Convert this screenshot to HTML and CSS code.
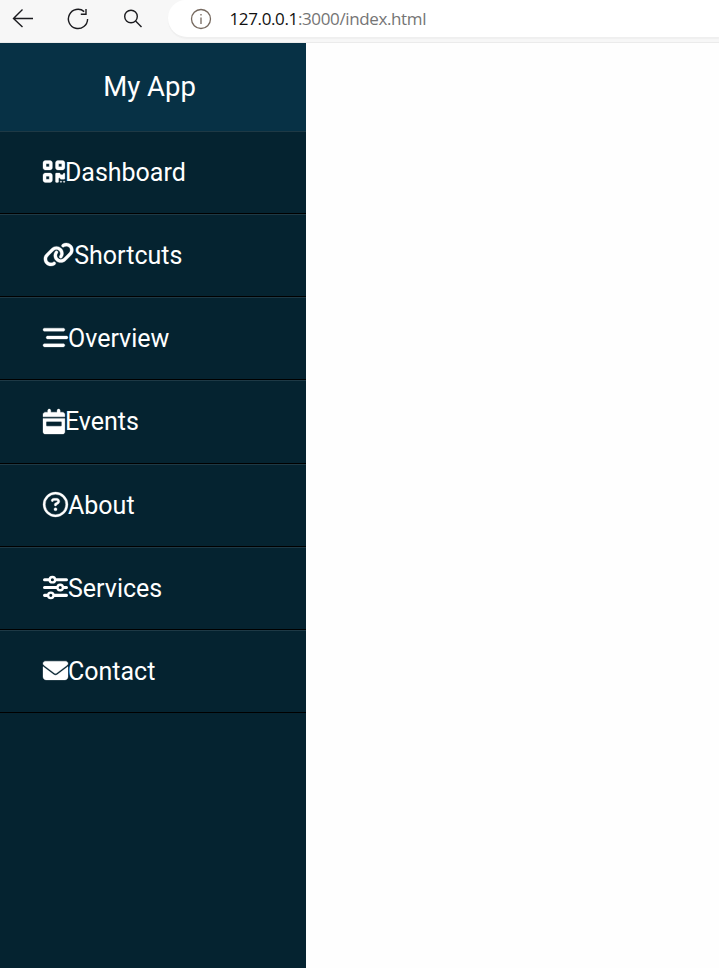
FILE: index.html
```html
<!DOCTYPE html>
<html lang="en">
<head>
<meta charset="utf-8">
<title>My App</title>
<link rel="stylesheet" href="styles.css">
</head>
<body>
<header class="toolbar">
  <svg class="tools" width="168" height="43" viewBox="0 0 168 43">
    <path d="M33 18.5H13.5M22.5 9.5L13.5 18.5L22.5 27"/>
    <path d="M84.2 11.6A9.6 9.6 0 1 0 87.6 19M86 9V14.3H80.8"/>
    <circle cx="131" cy="16.5" r="6.3"/><path d="M135.6 21.1L141.5 27"/>
  </svg>
  <div class="address">
    <svg class="info" width="22" height="22" viewBox="0 0 22 22"><circle cx="11" cy="11" r="9.5"/><path d="M11 9.5V16M11 6V7.5"/></svg>
    <span class="url"><span class="host">127.0.0.1</span>:3000/index.html</span>
  </div>
</header>
<aside class="sidebar">
  <h1 class="title">My App</h1>
  <nav>
    <a class="item"><svg class="icon" viewBox="0 0 448 512"><path d="M0 80C0 53.5 21.5 32 48 32h96c26.5 0 48 21.5 48 48v96c0 26.5-21.5 48-48 48H48c-26.5 0-48-21.5-48-48V80zM64 96v64h64V96H64zM0 336c0-26.5 21.5-48 48-48h96c26.5 0 48 21.5 48 48v96c0 26.5-21.5 48-48 48H48c-26.5 0-48-21.5-48-48V336zm64 16v64h64V352H64zM304 32h96c26.500 0 48 21.500 48 48v96c0 26.500-21.500 48-48 48H304c-26.500 0-48-21.500-48-48V80c0-26.500 21.500-48 48-48zm80 64H320v64h64V96zM256 304c0-8.800 7.200-16 16-16h64c8.800 0 16 7.200 16 16s7.200 16 16 16h32c8.800 0 16-7.200 16-16s7.200-16 16-16s16 7.200 16 16v96c0 8.800-7.200 16-16 16H368c-8.800 0-16-7.200-16-16s-7.200-16-16-16s-16 7.200-16 16v64c0 8.800-7.200 16-16 16H272c-8.800 0-16-7.200-16-16V304zM368 480a16 16 0 1 1 0-32 16 16 0 1 1 0 32zm64 0a16 16 0 1 1 0-32 16 16 0 1 1 0 32z"/></svg>Dashboard</a>
    <a class="item"><svg class="icon" viewBox="0 0 640 512"><path d="M579.8 267.7c56.5-56.5 56.5-148 0-204.500c-50-50-128.800-56.500-186.300-15.400l-1.600 1.100c-14.400 10.300-17.700 30.300-7.400 44.600s30.300 17.700 44.600 7.400l1.600-1.100c32.100-22.900 76-19.300 103.800 8.600c31.500 31.500 31.500 82.500 0 114L422.300 334.800c-31.500 31.500-82.500 31.500-114 0c-27.900-27.900-31.500-71.800-8.600-103.800l1.100-1.600c10.300-14.400 6.900-34.400-7.400-44.600s-34.400-6.900-44.600 7.400l-1.100 1.600C206.500 251.200 213 330 263 380c56.500 56.500 148 56.500 204.500 0L579.800 267.700zM60.200 244.300c-56.500 56.500-56.500 148 0 204.500c50 50 128.800 56.500 186.300 15.400l1.600-1.100c14.400-10.300 17.700-30.300 7.400-44.600s-30.300-17.700-44.600-7.400l-1.600 1.100c-32.100 22.900-76 19.300-103.800-8.600C74 372 74 321 105.500 289.500L217.700 177.200c31.500-31.500 82.500-31.500 114 0c27.900 27.900 31.500 71.800 8.600 103.900l-1.100 1.600c-10.300 14.400-6.900 34.400 7.400 44.600s34.400 6.900 44.600-7.400l1.100-1.600C433.500 260.800 427 182 377 132c-56.500-56.500-148-56.500-204.500 0L60.200 244.300z"/></svg>Shortcuts</a>
    <a class="item"><svg class="icon" viewBox="0 0 512 512"><path d="M0 96C0 78.300 14.300 64 32 64H416c17.700 0 32 14.300 32 32s-14.300 32-32 32H32C14.300 128 0 113.700 0 96zM64 256c0-17.700 14.300-32 32-32H480c17.700 0 32 14.300 32 32s-14.300 32-32 32H96c-17.700 0-32-14.300-32-32zM448 416c0 17.700-14.300 32-32 32H32c-17.700 0-32-14.300-32-32s14.300-32 32-32H416c17.700 0 32 14.300 32 32z"/></svg>Overview</a>
    <a class="item"><svg class="icon" viewBox="0 0 448 512"><path d="M128 0c17.700 0 32 14.300 32 32V64H288V32c0-17.700 14.300-32 32-32s32 14.300 32 32V64h48c26.500 0 48 21.500 48 48v48H0V112C0 85.500 21.500 64 48 64H96V32c0-17.700 14.300-32 32-32zM0 192H448V464c0 26.500-21.500 48-48 48H48c-26.500 0-48-21.500-48-48V192zm80 64c-8.800 0-16 7.200-16 16v64c0 8.800 7.200 16 16 16H368c8.800 0 16-7.200 16-16V272c0-8.800-7.200-16-16-16H80z"/></svg>Events</a>
    <a class="item"><svg class="icon" viewBox="0 0 512 512"><path d="M464 256A208 208 0 1 0 48 256a208 208 0 1 0 416 0zM0 256a256 256 0 1 1 512 0A256 256 0 1 1 0 256zm169.800-90.700c7.900-22.300 29.100-37.300 52.800-37.300h58.300c34.900 0 63.100 28.300 63.100 63.100c0 22.600-12.100 43.500-31.700 54.800L280 264.400c-.2 13-10.900 23.600-24 23.600c-13.300 0-24-10.700-24-24V250.500c0-8.600 4.600-16.500 12.100-20.800l44.300-25.400c4.700-2.700 7.600-7.700 7.600-13.100c0-8.400-6.800-15.100-15.100-15.100H222.600c-3.400 0-6.400 2.100-7.500 5.300l-.4 1.200c-4.400 12.500-18.200 19-30.600 14.600s-19-18.200-14.600-30.600l.4-1.200zM224 352a32 32 0 1 1 64 0 32 32 0 1 1-64 0z"/></svg>About</a>
    <a class="item"><svg class="icon sliders" viewBox="0 0 512 512"><path d="M32 96H120M264 96H480M32 256H280M424 256H480M32 416H88M232 416H480"/><g class="knobs"><circle cx="192" cy="96" r="56"/><circle cx="352" cy="256" r="56"/><circle cx="160" cy="416" r="56"/></g></svg>Services</a>
    <a class="item"><svg class="icon" viewBox="0 0 512 512"><path d="M48 64C21.500 64 0 85.500 0 112c0 15.100 7.100 29.300 19.200 38.400L236.800 313.600c11.400 8.500 27 8.500 38.400 0L492.800 150.400c12.100-9.100 19.200-23.300 19.200-38.400c0-26.500-21.500-48-48-48H48zM0 176V384c0 35.300 28.700 64 64 64H448c35.300 0 64-28.700 64-64V176L294.400 339.200c-22.800 17.100-54 17.100-76.800 0L0 176z"/></svg>Contact</a>
  </nav>
</aside>
</body>
</html>
```

FILE: styles.css
```css
* { box-sizing: border-box; }
body {
  margin: 0;
  height: 968px;
  display: flex;
  flex-direction: column;
  overflow: hidden;
  background: #fefefe;
  font-family: Roboto, sans-serif;
}
.toolbar {
  flex: none;
  display: flex;
  height: 43px;
  background: #f7f7f7;
  border-bottom: 1px solid #ebebeb;
}
.tools { flex: none; fill: none; stroke: #1b1b1f; stroke-width: 1.4; }
.address {
  flex: 1;
  display: flex;
  align-items: center;
  height: 37px;
  padding-left: 21.5px;
  background: #fff;
  border-radius: 18px 0 0 19px;
  box-shadow: 0 2px 1px #efefef;
}
.info { flex: none; fill: none; stroke: #76695f; stroke-width: 1.3; }
.url {
  margin-left: 18px;
  font: 17px/36px "Open Sans", sans-serif;
  letter-spacing: -0.37px;
  color: #757575;
  white-space: nowrap;
}
.host { color: #111; }
.sidebar {
  flex: 1;
  width: 306px;
  background: #052330;
  color: #fff;
}
.title {
  height: 87.65px;
  margin: 0;
  padding-right: 7px;
  background: #073145;
  font-size: 27.5px;
  font-weight: 400;
  line-height: 87.5px;
  text-align: center;
}
.item {
  display: flex;
  align-items: center;
  height: 83.23px;
  padding-left: 43px;
  border-top: 1px solid rgba(255, 255, 255, 0.1);
  border-bottom: 1px solid #000;
  font-size: 25px;
}
.icon {
  flex: none;
  height: 25px;
  margin-bottom: 1.5px;
  fill: #fff;
  stroke: #fff;
  stroke-width: 6;
  overflow: visible;
}
.sliders { fill: none; stroke-width: 64; stroke-linecap: round; }
.knobs { stroke-width: 48; }
```
